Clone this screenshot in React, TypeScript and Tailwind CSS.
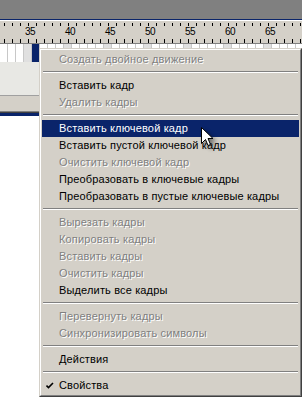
import React from 'react';

type Item = { label?: string; disabled?: boolean; active?: boolean; checked?: boolean; sep?: boolean };

const items: Item[] = [
  { label: 'Создать двойное движение', disabled: true },
  { sep: true },
  { label: 'Вставить кадр' },
  { label: 'Удалить кадры', disabled: true },
  { sep: true },
  { label: 'Вставить ключевой кадр', active: true },
  { label: 'Вставить пустой ключевой кадр' },
  { label: 'Очистить ключевой кадр', disabled: true },
  { label: 'Преобразовать в ключевые кадры' },
  { label: 'Преобразовать в пустые ключевые кадры' },
  { sep: true },
  { label: 'Вырезать кадры', disabled: true },
  { label: 'Копировать кадры', disabled: true },
  { label: 'Вставить кадры', disabled: true },
  { label: 'Очистить кадры', disabled: true },
  { label: 'Выделить все кадры' },
  { sep: true },
  { label: 'Перевернуть кадры', disabled: true },
  { label: 'Синхронизировать символы', disabled: true },
  { sep: true },
  { label: 'Действия' },
  { sep: true },
  { label: 'Свойства', checked: true },
];

const groups = [35, 40, 45, 50, 55, 60, 65];
const frames = Array.from({ length: 40 }, (_, i) => 32 + i);

function Ruler() {
  return (
    <div className="relative h-[22px] bg-[#d4d0c8] overflow-hidden">
      <svg className="absolute left-0 top-0" width="302" height="22">
        {Array.from({ length: 38 }, (_, i) => (
          <g key={i}>
            <line x1={i * 8 + 4.5} y1="2" x2={i * 8 + 4.5} y2="5" stroke="#000" strokeWidth="1" />
            <line x1={i * 8 + 4.5} y1="18" x2={i * 8 + 4.5} y2="22" stroke="#000" strokeWidth="1" />
          </g>
        ))}
      </svg>
      <div className="relative flex pl-[24px] pt-[6px]">
        {groups.map((g) => (
          <div key={g} className="w-[40px] shrink-0 pl-[1px] text-[10px] leading-[10px] tracking-[-0.5px] text-black">
            {g}
          </div>
        ))}
      </div>
    </div>
  );
}

function FrameRow() {
  return (
    <div className="flex h-[18px] bg-white overflow-hidden">
      {frames.map((f) => (
        <div
          key={f}
          className={
            'w-[8px] shrink-0 border-r border-[#c8c8c8] ' +
            (f === 36 ? 'bg-[#0a246a]' : f % 5 === 0 ? 'bg-[#e0e0e0]' : 'bg-white')
          }
        />
      ))}
    </div>
  );
}

function Check() {
  return (
    <svg width="8" height="8" viewBox="0 0 8 8">
      <path d="M0.5 3.5 L2.5 5.5 L7 1" stroke="#000" strokeWidth="1.6" fill="none" />
    </svg>
  );
}

function Cursor() {
  return (
    <svg
      className="absolute left-[201px] top-[127px] [filter:drop-shadow(3px_3px_2px_rgba(0,0,0,0.45))]"
      width="13"
      height="21"
      viewBox="0 0 13 21"
    >
      <path d="M0.5 0.5 L0.5 16.5 L4.5 12.5 L7 18.5 L9.5 17.5 L7 11.5 L12 11.5 Z" fill="#fff" stroke="#000" strokeWidth="1" />
    </svg>
  );
}

function Menu() {
  return (
    <div className="absolute left-[39px] top-[48px] w-[263px] border border-t-[#d4d0c8] border-l-[#d4d0c8] border-r-[#404040] border-b-[#404040]">
      <div className="border border-t-white border-l-white border-r-[#808080] border-b-[#808080] bg-[#d4d0c8] p-[1px]">
        {items.map((it, i) =>
          it.sep ? (
            <div key={i} className="pt-[3px] pb-[4px] px-[1px]">
              <div className="h-[1px] bg-[#808080]" />
              <div className="h-[1px] bg-white" />
            </div>
          ) : (
            <div
              key={i}
              className={
                'relative flex items-center h-[17px] pl-[17px] text-[11px] leading-[17px] tracking-[0.15px] whitespace-nowrap ' +
                (it.active
                  ? 'bg-[#0a246a] text-white'
                  : it.disabled
                  ? 'text-[#808080] [text-shadow:1px_1px_0_#fff]'
                  : 'text-black')
              }
            >
              {it.checked && (
                <span className="absolute left-[4px] top-[5px] flex">
                  <Check />
                </span>
              )}
              {it.label}
            </div>
          )
        )}
      </div>
    </div>
  );
}

export default function App() {
  return (
    <div className="relative w-[302px] h-[397px] overflow-hidden flex flex-col bg-white font-['Liberation_Sans',Arial,sans-serif]">
      <div className="h-[19px] bg-[#808080]" />
      <div className="h-[1px] bg-[#0a246a]" />
      <div className="h-[1px] bg-white" />
      <Ruler />
      <div className="h-[1px] bg-[#808080]" />
      <FrameRow />
      <div className="h-[33px] bg-[#e8e8e4]" />
      <div className="h-[1px] bg-[#a0a0a0]" />
      <div className="h-[15px] bg-[#d4d0c8]" />
      <div className="h-[1px] bg-[#808080]" />
      <div className="h-[1px] bg-[#404040]" />
      <div className="h-[3px] bg-[#0a246a]" />
      <div className="flex-1 bg-white" />
      <Menu />
      <Cursor />
    </div>
  );
}
